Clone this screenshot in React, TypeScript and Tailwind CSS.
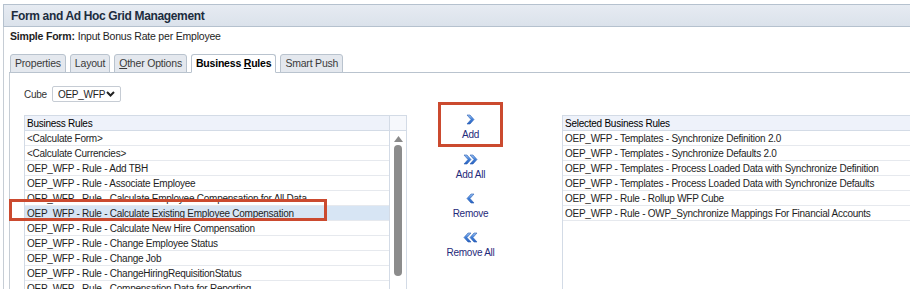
const leftRules = [
  '<Calculate Form>',
  '<Calculate Currencies>',
  'OEP_WFP - Rule - Add TBH',
  'OEP_WFP - Rule - Associate Employee',
  'OEP_WFP - Rule - Calculate Employee Compensation for All Data',
  'OEP_WFP - Rule - Calculate Existing Employee Compensation',
  'OEP_WFP - Rule - Calculate New Hire Compensation',
  'OEP_WFP - Rule - Change Employee Status',
  'OEP_WFP - Rule - Change Job',
  'OEP_WFP - Rule - ChangeHiringRequisitionStatus',
  'OEP_WFP - Rule - Compensation Data for Reporting',
]

const selectedRules = [
  'OEP_WFP - Templates - Synchronize Definition 2.0',
  'OEP_WFP - Templates - Synchronize Defaults 2.0',
  'OEP_WFP - Templates - Process Loaded Data with Synchronize Definition',
  'OEP_WFP - Templates - Process Loaded Data with Synchronize Defaults',
  'OEP_WFP - Rule - Rollup WFP Cube',
  'OEP_WFP - Rule - OWP_Synchronize Mappings For Financial Accounts',
]

const Chevron = ({ dir, double }: { dir: 'left' | 'right'; double?: boolean }) => {
  const single = 'M1 1 L4 1 L8 5.5 L4 10 L1 10 L5 5.5 Z'
  return (
    <svg width={double ? 15 : 9} height="11" viewBox={double ? '0 0 15 11' : '0 0 9 11'} className={dir === 'left' ? '-scale-x-100' : ''}>
      <defs>
        <linearGradient id="chev" x1="0" y1="0" x2="0" y2="1">
          <stop offset="0" stopColor="#9cc2f2" />
          <stop offset="0.5" stopColor="#3f7fd9" />
          <stop offset="1" stopColor="#2a62c0" />
        </linearGradient>
      </defs>
      <path d={single} fill="url(#chev)" stroke="#2b5fb4" strokeWidth="0.6" />
      {double && <path d={single} transform="translate(6 0)" fill="url(#chev)" stroke="#2b5fb4" strokeWidth="0.6" />}
    </svg>
  )
}

const MoveButton = ({ label, dir, double }: { label: string; dir: 'left' | 'right'; double?: boolean }) => (
  <div className="flex flex-col items-center gap-[3px] h-[39px] pt-[2px]">
    <Chevron dir={dir} double={double} />
    <span className="text-[#1f2a7a] leading-[13px]">{label}</span>
  </div>
)

const Tab = ({ children, active }: { children: React.ReactNode; active?: boolean }) => (
  <div
    className={
      'h-[19px] px-[4px] flex items-center border border-[#b9c3ce] rounded-t-[3px] -mb-px ' +
      (active ? 'bg-white border-b-white font-bold text-black' : 'bg-[#e4e8ee] text-[#3a3a3a]')
    }
  >
    <span>{children}</span>
  </div>
)

export default function App() {
  return (
    <div
      className="w-[910px] h-[289px] overflow-hidden bg-white text-[10px] tracking-[-0.25px] text-[#1e1e1e]"
      style={{ fontFamily: '"Liberation Sans", Arial, sans-serif' }}
    >
      <div className="ml-[3px] pt-[4px]">
        <div className="h-[23px] border-y border-l border-[#b5c1ce] bg-gradient-to-b from-[#e6ebf2] to-[#dbe2eb] flex items-center pl-[7px] text-[12px] tracking-[-0.35px] font-bold text-[#1c2c3e]">
          Form and Ad Hoc Grid Management
        </div>
        <div className="border-l border-[#c6cdd5]">
          <div className="h-[20px] flex items-center pl-[6px] text-[10.5px] tracking-[-0.2px]">
            <span className="font-bold">Simple Form:</span>
            <span className="ml-[3px]">Input Bonus Rate per Employee</span>
          </div>
          <div className="mt-[7px] ml-[5px] flex gap-[4px] items-end border-b border-[#b9c3ce] pl-[1px] text-[10.5px] tracking-[-0.2px]">
            <Tab>Properties</Tab>
            <Tab>Layout</Tab>
            <Tab>
              <span className="underline">O</span>ther Options
            </Tab>
            <Tab active>
              Business <span className="underline">R</span>ules
            </Tab>
            <Tab>Smart Push</Tab>
          </div>
          <div className="ml-[5px] border-l border-[#c6cdd5] pl-[14px] pt-[13px] h-[220px]">
            <div className="h-[16px] flex items-center gap-[5px]">
              <span className="text-[#333]">Cube</span>
              <div className="h-[16px] w-[69px] border border-[#c6ccd4] rounded-[2px] flex items-center justify-between pl-[5px] pr-[5px]">
                <span>OEP_WFP</span>
                <svg width="9" height="6" viewBox="0 0 9 6">
                  <path d="M1 1 L4.5 4.5 L8 1" fill="none" stroke="#222" strokeWidth="2" />
                </svg>
              </div>
            </div>
            <div className="flex">
              <div className="mt-[13px] relative w-[383px] shrink-0 flex border border-[#d3dbe6]">
                <div className="flex-1 min-w-0">
                  <div className="h-[15px] bg-[#eef2fa] border-b border-[#d3dbe6] flex items-center pl-[2px] text-black">
                    Business Rules
                  </div>
                  {leftRules.map((r, i) => (
                    <div
                      key={r}
                      className={
                        'h-[15px] border-b border-[#e6e9ee] flex items-center pl-[2px] whitespace-nowrap overflow-hidden ' +
                        (i === 5 ? 'bg-[#d7e5f4]' : '')
                      }
                    >
                      {r}
                    </div>
                  ))}
                </div>
                <div className="w-[17px] border-l border-[#d3dbe6] flex flex-col items-center">
                  <div className="h-[15px] w-full bg-[#f6f8fc] border-b border-[#d3dbe6]" />
                  <svg width="9" height="6" viewBox="0 0 9 6" className="mt-[5px]">
                    <path d="M0 6 L4.5 0 L9 6 Z" fill="#8a8a8a" />
                  </svg>
                  <div className="mt-[3px] w-[8px] h-[131px] rounded-full bg-[#8c8c8c]" />
                </div>
                <div className="absolute left-[-16px] top-[83px] w-[318px] h-[22px] border-[3px] border-[#cb4a2f]" />
              </div>
              <div className="w-[155px] shrink-0 pl-[31px]">
                <div className="w-[65px] flex flex-col items-center">
                  <div className="w-[65px] h-[45px] border-[3px] border-[#cb4a2f] flex flex-col items-center justify-center gap-[3px] pt-[6px]">
                    <Chevron dir="right" />
                    <span className="text-[#1f2a7a] leading-[13px]">Add</span>
                  </div>
                  <div className="mt-[5px] w-[80px] flex flex-col items-center">
                    <MoveButton label="Add All" dir="right" double />
                    <MoveButton label="Remove" dir="left" />
                    <MoveButton label="Remove All" dir="left" double />
                  </div>
                </div>
              </div>
              <div className="mt-[13px] flex-1 min-w-0 overflow-hidden border border-r-0 border-[#d3dbe6] h-[200px]">
                <div className="h-[15px] bg-[#eef2fa] border-b border-[#d3dbe6] flex items-center pl-[2px] text-black">
                  Selected Business Rules
                </div>
                {selectedRules.map((r) => (
                  <div key={r} className="h-[15px] border-b border-[#e6e9ee] flex items-center pl-[2px] whitespace-nowrap">
                    {r}
                  </div>
                ))}
              </div>
            </div>
          </div>
        </div>
      </div>
    </div>
  )
}
